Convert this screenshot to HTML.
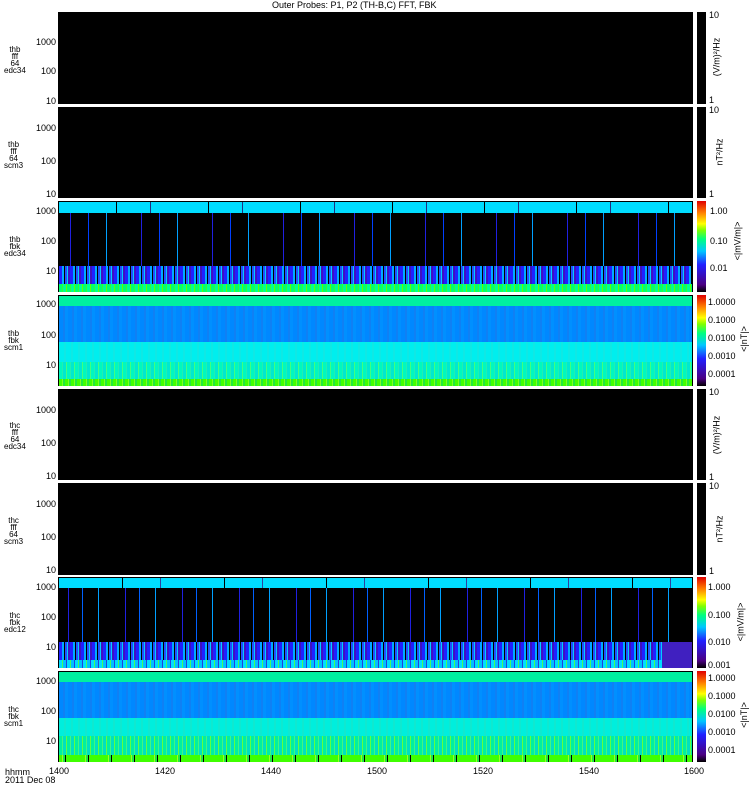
<!DOCTYPE html>
<html><head><meta charset="utf-8"><style>
body{margin:0;background:#fff;width:750px;height:800px;position:relative;overflow:hidden;font-family:"Liberation Sans",sans-serif;font-size:9px;color:#000}
.p{position:absolute;left:58px;width:635px;background:#000;border:1px solid #000;box-sizing:border-box}
.b{position:absolute;left:0;right:0}
.cb{position:absolute;left:697px;width:9px;background:linear-gradient(to top,#000 0%,#4b0082 8%,#2020ff 30%,#00c8ff 45%,#00ff80 58%,#80ff00 68%,#ffff00 75%,#ff8000 87%,#e00000 100%)}
.cbk{position:absolute;left:697px;width:9px;background:#000}
.t{position:absolute;font-size:9px;line-height:9px;white-space:nowrap}
.y{position:absolute;font-size:9px;line-height:9px;right:694px;text-align:right}
.rl{position:absolute;font-size:9px;transform:rotate(-90deg);white-space:nowrap;transform-origin:center}
</style></head><body>
<div class="t" style="left:272px;top:1px">Outer Probes: P1, P2 (TH-B,C) FFT, FBK</div>

<!-- panel 1 -->
<div class="p" style="top:12px;height:92px"></div>
<div class="y" style="top:38px">1000</div><div class="y" style="top:67px">100</div><div class="y" style="top:97px">10</div>
<div class="t" style="left:4px;top:46px;font-size:8px;line-height:7px;text-align:center">thb<br>fff<br>64<br>edc34</div>
<div class="cbk" style="top:12px;height:92px"></div>
<div class="t" style="left:709px;top:11px">10</div><div class="t" style="left:709px;top:96px">1</div>
<div class="rl" style="left:697px;top:52px">(V/m)²/Hz</div>

<!-- panel 2 -->
<div class="p" style="top:107px;height:91px"></div>
<div class="y" style="top:124px">1000</div><div class="y" style="top:157px">100</div><div class="y" style="top:190px">10</div>
<div class="t" style="left:4px;top:141px;font-size:8px;line-height:7px;text-align:center">thb<br>fff<br>64<br>scm3</div>
<div class="cbk" style="top:107px;height:91px"></div>
<div class="t" style="left:709px;top:106px">10</div><div class="t" style="left:709px;top:190px">1</div>
<div class="rl" style="left:706px;top:147px">nT²/Hz</div>

<!-- panel 3 -->
<div class="p" style="top:201px;height:91px">
 <div class="b" style="top:0;height:11px;background:repeating-linear-gradient(90deg,#00ddff 0 57px,#000 57px 58px,#00ddff 58px 91px,#203080 91px 92px)"></div>
 <div class="b" style="top:11px;height:53px;background:repeating-linear-gradient(90deg,#000 0 11px,#2020e0 11px 12px,#000 12px 29px,#0040ff 29px 30px,#000 30px 47px,#00a0ff 47px 48px,#000 48px 71px)"></div>
 <div class="b" style="top:64px;height:18px;background:repeating-linear-gradient(90deg,#2020ff 0 3px,#00aaff 3px 5px,#000 5px 6px,#2050ff 6px 8px,#00ccff 8px 9px,#4010c0 9px 11px)"></div>
 <div class="b" style="top:82px;height:8px;background:repeating-linear-gradient(90deg,#00ff70 0 3px,#30ff30 3px 4px,#00ff90 4px 7px,#60ff00 7px 8px)"></div>
</div>
<div class="y" style="top:207px">1000</div><div class="y" style="top:237px">100</div><div class="y" style="top:267px">10</div>
<div class="t" style="left:4px;top:236px;font-size:8px;line-height:7px;text-align:center">thb<br>fbk<br>edc34</div>
<div class="cb" style="top:201px;height:91px"></div>
<div class="t" style="left:710px;top:207px">1.00</div><div class="t" style="left:710px;top:237px">0.10</div><div class="t" style="left:710px;top:264px">0.01</div>
<div class="rl" style="left:718px;top:236px">&lt;|mV/m|&gt;</div>

<!-- panel 4 -->
<div class="p" style="top:295px;height:91px">
 <div class="b" style="top:0;height:10px;background:#00f0a0"></div>
 <div class="b" style="top:10px;height:36px;background:repeating-linear-gradient(90deg,#0088ff 0 4px,#1080f4 4px 6px,#0090ff 6px 9px)"></div>
 <div class="b" style="top:46px;height:20px;background:repeating-linear-gradient(90deg,#00eeee 0 5px,#10e8e4 5px 7px)"></div>
 <div class="b" style="top:66px;height:17px;background:repeating-linear-gradient(90deg,#00f8c0 0 3px,#20f0b0 3px 4px,#00e8d0 4px 7px,#40ff80 7px 8px)"></div>
 <div class="b" style="top:83px;height:7px;background:repeating-linear-gradient(90deg,#40ff00 0 3px,#80ff20 3px 4px,#20e840 4px 6px)"></div>
</div>
<div class="y" style="top:300px">1000</div><div class="y" style="top:331px">100</div><div class="y" style="top:361px">10</div>
<div class="t" style="left:4px;top:330px;font-size:8px;line-height:7px;text-align:center">thb<br>fbk<br>scm1</div>
<div class="cb" style="top:295px;height:91px"></div>
<div class="t" style="left:708px;top:298px">1.0000</div><div class="t" style="left:708px;top:316px">0.1000</div><div class="t" style="left:708px;top:334px">0.0100</div><div class="t" style="left:708px;top:352px">0.0010</div><div class="t" style="left:708px;top:370px">0.0001</div>
<div class="rl" style="left:731px;top:334px">&lt;|nT|&gt;</div>

<!-- panel 5 -->
<div class="p" style="top:389px;height:91px"></div>
<div class="y" style="top:406px">1000</div><div class="y" style="top:439px">100</div><div class="y" style="top:472px">10</div>
<div class="t" style="left:4px;top:422px;font-size:8px;line-height:7px;text-align:center">thc<br>fff<br>64<br>edc34</div>
<div class="cbk" style="top:389px;height:91px"></div>
<div class="t" style="left:709px;top:388px">10</div><div class="t" style="left:709px;top:473px">1</div>
<div class="rl" style="left:697px;top:430px">(V/m)²/Hz</div>

<!-- panel 6 -->
<div class="p" style="top:483px;height:92px"></div>
<div class="y" style="top:500px">1000</div><div class="y" style="top:533px">100</div><div class="y" style="top:566px">10</div>
<div class="t" style="left:4px;top:517px;font-size:8px;line-height:7px;text-align:center">thc<br>fff<br>64<br>scm3</div>
<div class="cbk" style="top:483px;height:92px"></div>
<div class="t" style="left:709px;top:482px">10</div><div class="t" style="left:709px;top:567px">1</div>
<div class="rl" style="left:706px;top:524px">nT²/Hz</div>

<!-- panel 7 -->
<div class="p" style="top:577px;height:91px">
 <div class="b" style="top:0;height:10px;background:repeating-linear-gradient(90deg,#00ddff 0 63px,#000 63px 64px,#00ddff 64px 101px,#3040a0 101px 102px)"></div>
 <div class="b" style="top:10px;height:54px;background:repeating-linear-gradient(90deg,#000 0 9px,#2020e0 9px 10px,#000 10px 23px,#0060ff 23px 24px,#000 24px 39px,#00a0ff 39px 40px,#000 40px 57px)"></div>
 <div class="b" style="top:64px;height:18px;background:repeating-linear-gradient(90deg,#2020ff 0 3px,#00aaff 3px 5px,#000 5px 6px,#2050ff 6px 8px,#00ccff 8px 9px,#4010c0 9px 11px)"></div>
 <div class="b" style="top:82px;height:8px;background:repeating-linear-gradient(90deg,#00ddff 0 3px,#40ff60 3px 4px,#00c0ff 4px 7px,#2040e0 7px 8px)"></div>
 <div style="position:absolute;right:0;top:64px;width:30px;height:26px;background:#4020c0"></div>
</div>
<div class="y" style="top:583px">1000</div><div class="y" style="top:613px">100</div><div class="y" style="top:643px">10</div>
<div class="t" style="left:4px;top:612px;font-size:8px;line-height:7px;text-align:center">thc<br>fbk<br>edc12</div>
<div class="cb" style="top:577px;height:91px"></div>
<div class="t" style="left:708px;top:583px">1.000</div><div class="t" style="left:708px;top:611px">0.100</div><div class="t" style="left:708px;top:638px">0.010</div><div class="t" style="left:708px;top:661px">0.001</div>
<div class="rl" style="left:721px;top:617px">&lt;|mV/m|&gt;</div>

<!-- panel 8 -->
<div class="p" style="top:671px;height:91px">
 <div class="b" style="top:0;height:10px;background:#00f0a0"></div>
 <div class="b" style="top:10px;height:36px;background:repeating-linear-gradient(90deg,#0088ff 0 4px,#1080f4 4px 6px,#0090ff 6px 9px)"></div>
 <div class="b" style="top:46px;height:18px;background:repeating-linear-gradient(90deg,#00eedd 0 5px,#10e8d0 5px 7px)"></div>
 <div class="b" style="top:64px;height:19px;background:repeating-linear-gradient(90deg,#00f0a0 0 3px,#40f880 3px 4px,#00e0c0 4px 7px,#60ff40 7px 8px)"></div>
 <div class="b" style="top:83px;height:7px;background:repeating-linear-gradient(90deg,#40ff00 0 3px,#a0ff20 3px 4px,#20e840 4px 6px,#000 6px 7px,#40ff00 7px 23px)"></div>
</div>
<div class="y" style="top:677px">1000</div><div class="y" style="top:707px">100</div><div class="y" style="top:737px">10</div>
<div class="t" style="left:4px;top:706px;font-size:8px;line-height:7px;text-align:center">thc<br>fbk<br>scm1</div>
<div class="cb" style="top:671px;height:91px"></div>
<div class="t" style="left:708px;top:674px">1.0000</div><div class="t" style="left:708px;top:692px">0.1000</div><div class="t" style="left:708px;top:710px">0.0100</div><div class="t" style="left:708px;top:728px">0.0010</div><div class="t" style="left:708px;top:746px">0.0001</div>
<div class="rl" style="left:731px;top:710px">&lt;|nT|&gt;</div>

<!-- x axis -->
<div class="t" style="left:5px;top:768px">hhmm</div>
<div class="t" style="left:5px;top:776px">2011 Dec 08</div>
<div class="t" style="left:49px;top:767px">1400</div>
<div class="t" style="left:155px;top:767px">1420</div>
<div class="t" style="left:261px;top:767px">1440</div>
<div class="t" style="left:367px;top:767px">1500</div>
<div class="t" style="left:473px;top:767px">1520</div>
<div class="t" style="left:579px;top:767px">1540</div>
<div class="t" style="left:684px;top:767px">1600</div>
</body></html>
